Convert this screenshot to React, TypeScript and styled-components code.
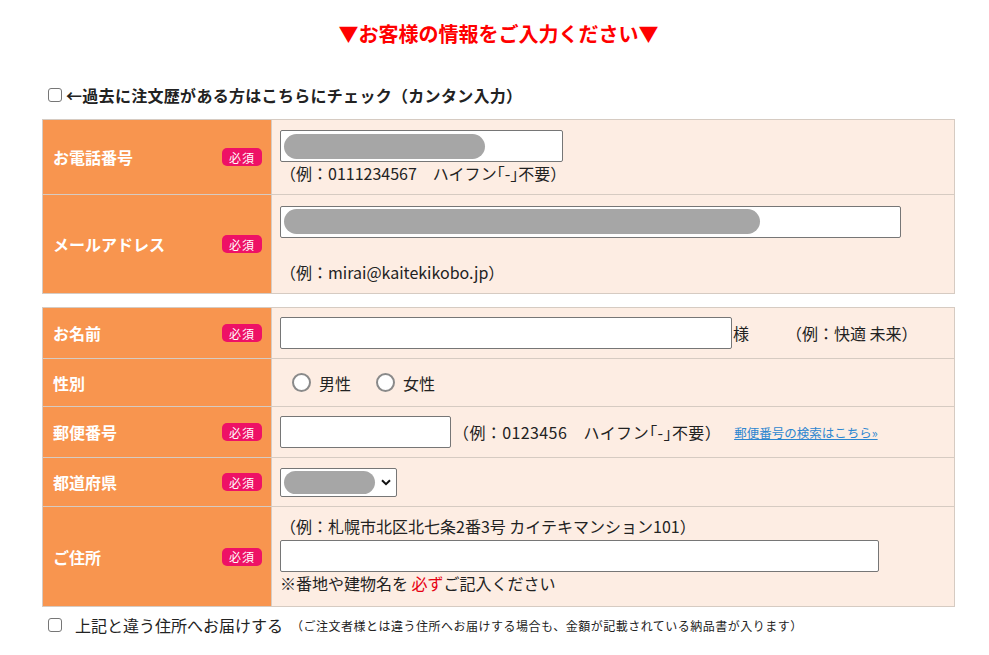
import styled, { createGlobalStyle } from 'styled-components';

const GlobalStyle = createGlobalStyle`
  body {
    margin: 0;
    background: #fff;
    color: #222;
    font-family: "Noto Sans CJK JP", "Noto Sans", sans-serif;
  }
`;

const Page = styled.div`
  width: 913px;
  margin-left: 42px;
  padding-top: 19px;
`;

const Title = styled.h2`
  margin: 0;
  text-align: center;
  color: #ff0000;
  font-size: 20px;
  font-weight: bold;
  line-height: 30px;
`;

const CheckLine = styled.div<{ $top: number; $gap: number }>`
  display: flex;
  align-items: center;
  gap: ${(p) => p.$gap}px;
  margin-top: ${(p) => p.$top}px;
  padding-left: 6px;
  height: 22px;
  font-size: 16px;
`;

const CheckBox = styled.span`
  width: 14px;
  height: 14px;
  box-sizing: border-box;
  border: 1px solid #767676;
  border-radius: 3px;
  background: #fff;
  flex-shrink: 0;
`;

const CheckText = styled.span<{ $bold?: boolean }>`
  font-weight: ${(p) => (p.$bold ? 'bold' : 'normal')};
  letter-spacing: ${(p) => (p.$bold ? '0.3px' : '0')};
  line-height: 22px;
`;

const SmallNote = styled.span`
  font-size: 12px;
  letter-spacing: 0.5px;
  margin-left: -5px;
`;

const FormTable = styled.table<{ $top: number }>`
  width: 913px;
  margin-top: ${(p) => p.$top}px;
  border-collapse: collapse;
  border: 1px solid #d6cbc2;
`;

const Row = styled.tr<{ $h: number }>`
  height: ${(p) => p.$h}px;
`;

const LabelCell = styled.th`
  width: 209px;
  padding: 0 9px 0 10px;
  background: #f8954f;
  border: 1px solid #d6cbc2;
  text-align: left;
  vertical-align: middle;
`;

const LabelInner = styled.div`
  display: flex;
  align-items: center;
  justify-content: space-between;
  color: #fff;
  font-size: 16px;
  font-weight: bold;
`;

const Badge = styled.span`
  display: inline-flex;
  align-items: center;
  justify-content: center;
  width: 40px;
  height: 18px;
  border-radius: 5px;
  background: #ee1166;
  color: #fff;
  font-size: 12px;
  font-weight: normal;
  letter-spacing: 1px;
`;

const ValueCell = styled.td`
  padding: 0 8px;
  background: #fdede3;
  border: 1px solid #d6cbc2;
  vertical-align: middle;
  font-size: 16px;
`;

const Stack = styled.div`
  display: flex;
  flex-direction: column;
  align-items: flex-start;
`;

const Inline = styled.div`
  display: flex;
  align-items: center;
`;

const TextBox = styled.div<{ $w: number; $h?: number }>`
  width: ${(p) => p.$w}px;
  height: ${(p) => p.$h ?? 32}px;
  box-sizing: border-box;
  border: 1px solid #767676;
  border-radius: 2px;
  background: #fff;
  display: flex;
  align-items: center;
  padding: 0 3px;
  flex-shrink: 0;
`;

const Pill = styled.span<{ $w: number; $h?: number }>`
  width: ${(p) => p.$w}px;
  height: ${(p) => p.$h ?? 25}px;
  border-radius: 13px;
  background: #a6a6a6;
`;

const Hint = styled.div<{ $top?: number }>`
  margin-top: ${(p) => p.$top ?? 0}px;
  line-height: 22px;
  white-space: nowrap;
`;

const Suffix = styled.span`
  margin-left: 1px;
  line-height: 22px;
`;

const Sample = styled.span<{ $left: number; $spacing?: number }>`
  margin-left: ${(p) => p.$left}px;
  letter-spacing: ${(p) => p.$spacing ?? 0}px;
  line-height: 22px;
  white-space: nowrap;
`;

const SearchLink = styled.a`
  margin-left: 13px;
  font-size: 12.5px;
  color: #2c86d0;
  text-decoration: underline;
  white-space: nowrap;
`;

const RadioGroup = styled.div`
  display: flex;
  align-items: center;
  padding-left: 12px;
  gap: 25px;
`;

const RadioOption = styled.label`
  display: flex;
  align-items: center;
  gap: 8px;
  line-height: 22px;
`;

const RadioCircle = styled.span`
  width: 19px;
  height: 19px;
  box-sizing: border-box;
  border: 2px solid #8a8a8a;
  border-radius: 50%;
  background: #fff;
`;

const SelectBox = styled.div`
  width: 117px;
  height: 29px;
  box-sizing: border-box;
  border: 1px solid #767676;
  border-radius: 2px;
  background: #fff;
  display: flex;
  align-items: center;
  padding: 0 5px 0 3px;
  justify-content: space-between;
`;

const Required = styled.span`
  color: #e60012;
`;

function Label({ text, required = true }: { text: string; required?: boolean }) {
  return (
    <LabelCell>
      <LabelInner>
        <span>{text}</span>
        {required && <Badge>必須</Badge>}
      </LabelInner>
    </LabelCell>
  );
}

export default function App() {
  return (
    <>
      <GlobalStyle />
      <Page>
        <Title>▼お客様の情報をご入力ください▼</Title>

        <CheckLine $top={35} $gap={4}>
          <CheckBox />
          <CheckText $bold>←過去に注文歴がある方はこちらにチェック（カンタン入力）</CheckText>
        </CheckLine>

        <FormTable $top={13}>
          <tbody>
            <Row $h={75}>
              <Label text="お電話番号" />
              <ValueCell>
                <Stack>
                  <TextBox $w={283}>
                    <Pill $w={201} />
                  </TextBox>
                  <Hint>（例：0111234567　ハイフン｢-｣不要）</Hint>
                </Stack>
              </ValueCell>
            </Row>
            <Row $h={99}>
              <Label text="メールアドレス" />
              <ValueCell>
                <Stack>
                  <TextBox $w={621}>
                    <Pill $w={476} />
                  </TextBox>
                  <Hint $top={23}>（例：mirai@kaitekikobo.jp）</Hint>
                </Stack>
              </ValueCell>
            </Row>
          </tbody>
        </FormTable>

        <FormTable $top={13}>
          <tbody>
            <Row $h={51}>
              <Label text="お名前" />
              <ValueCell>
                <Inline>
                  <TextBox $w={452} />
                  <Suffix>様</Suffix>
                  <Sample $left={37}>（例：快適 未来）</Sample>
                </Inline>
              </ValueCell>
            </Row>
            <Row $h={48}>
              <Label text="性別" required={false} />
              <ValueCell>
                <RadioGroup>
                  <RadioOption>
                    <RadioCircle />
                    男性
                  </RadioOption>
                  <RadioOption>
                    <RadioCircle />
                    女性
                  </RadioOption>
                </RadioGroup>
              </ValueCell>
            </Row>
            <Row $h={51}>
              <Label text="郵便番号" />
              <ValueCell>
                <Inline>
                  <TextBox $w={171} />
                  <Sample $left={2} $spacing={0.4}>（例：0123456　ハイフン｢-｣不要）</Sample>
                  <SearchLink href="#">郵便番号の検索はこちら»</SearchLink>
                </Inline>
              </ValueCell>
            </Row>
            <Row $h={49}>
              <Label text="都道府県" />
              <ValueCell>
                <SelectBox>
                  <Pill $w={91} $h={23} />
                  <svg width="10" height="7" viewBox="0 0 10 7">
                    <path d="M1 1.2 L5 5.2 L9 1.2" fill="none" stroke="#111" strokeWidth="2" />
                  </svg>
                </SelectBox>
              </ValueCell>
            </Row>
            <Row $h={100}>
              <Label text="ご住所" />
              <ValueCell>
                <Stack>
                  <Hint $top={-4}>（例：札幌市北区北七条2番3号 カイテキマンション101）</Hint>
                  <TextBox $w={599} style={{ marginTop: 3 }} />
                  <Hint>
                    ※番地や建物名を <Required>必ず</Required>ご記入ください
                  </Hint>
                </Stack>
              </ValueCell>
            </Row>
          </tbody>
        </FormTable>

        <CheckLine $top={7} $gap={13}>
          <CheckBox />
          <CheckText>上記と違う住所へお届けする</CheckText>
          <SmallNote>（ご注文者様とは違う住所へお届けする場合も、金額が記載されている納品書が入ります）</SmallNote>
        </CheckLine>
      </Page>
    </>
  );
}
